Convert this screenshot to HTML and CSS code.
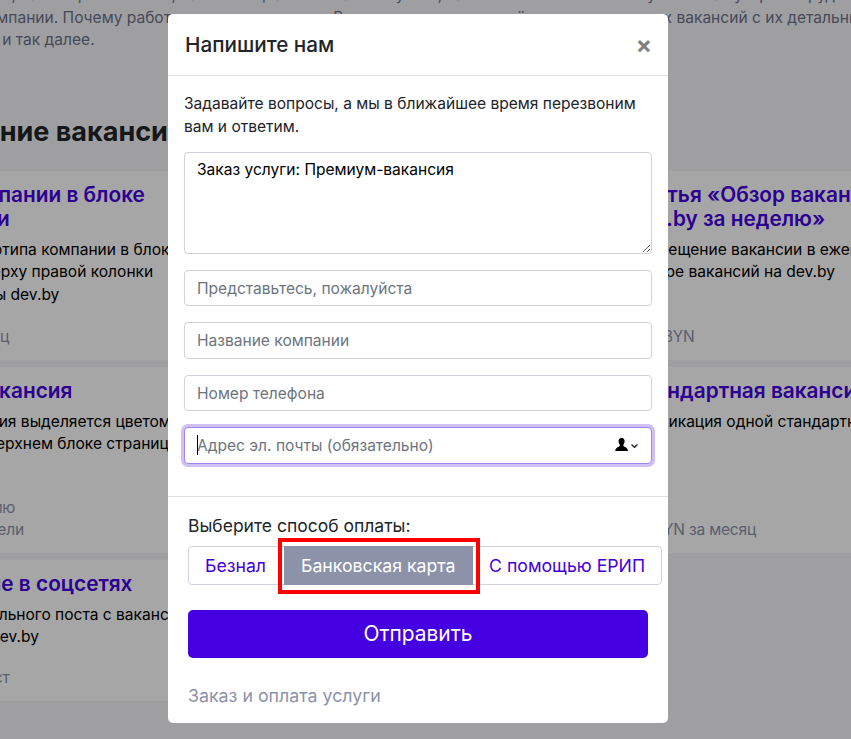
FILE: index.html
```html
<!DOCTYPE html>
<html lang="ru">
<head>
<meta charset="utf-8">
<title>Напишите нам</title>
<link rel="stylesheet" href="styles.css">
</head>
<body>
<main class="page">
  <p class="intro">Расскажите про то, какие проекты есть, какие специалисты на них нужны, какие технологии используются. Как устроен труд<br>и быт в вашей компании. Почему работать у вас интересно. В этом разделе размещён весь список всех вакансий с их детальным описанием<br>условиях работы и так далее.</p>
  <h1 class="section-title">Размещение вакансий</h1>
  <div class="cards">
    <article class="card">
      <h2 class="card-title">Логотип компании в блоке<br>топ-вакансии</h2>
      <p class="card-text">Размещение логотипа компании в блоке<br>Размещается вверху правой колонки<br>главной страницы dev.by</p>
      <p class="card-price">1600 BYN за месяц</p>
    </article>
    <article class="card"></article>
    <article class="card">
      <h2 class="card-title">Статья «Обзор вакансий<br>dev.by за неделю»</h2>
      <p class="card-text">Размещение вакансии в еженедельном<br>обзоре вакансий на dev.by</p>
      <p class="card-price">300 BYN</p>
    </article>
    <article class="card">
      <h2 class="card-title">Премиум-вакансия</h2>
      <p class="card-text">Премиум-вакансия выделяется цветом<br>Размещается в верхнем блоке страницы</p>
      <p class="card-price">500 BYN на неделю<br>700 BYN на 2 недели</p>
    </article>
    <article class="card"></article>
    <article class="card">
      <h2 class="card-title">Стандартная вакансия</h2>
      <p class="card-text">Публикация одной стандартной</p>
      <p class="card-price">50 BYN за месяц</p>
    </article>
    <article class="card">
      <h2 class="card-title">Продвижение в соцсетях</h2>
      <p class="card-text">Публикация отдельного поста с вакансией<br>в соцсетях и на dev.by</p>
      <p class="card-price">2000 BYN за 1 пост</p>
    </article>
  </div>
</main>

<div class="backdrop"></div>

<section class="modal">
  <header class="modal-header">
    <h2 class="modal-title">Напишите нам</h2>
    <span class="close">×</span>
  </header>
  <form class="modal-body">
    <p class="lead">Задавайте вопросы, а мы в ближайшее время перезвоним вам и ответим.</p>
    <textarea class="field field-area">Заказ услуги: Премиум-вакансия</textarea>
    <input class="field" type="text" placeholder="Представьтесь, пожалуйста">
    <input class="field" type="text" placeholder="Название компании">
    <input class="field" type="text" placeholder="Номер телефона">
    <div class="email-wrap">
      <input class="field field-focus" type="text" placeholder="Адрес эл. почты (обязательно)">
      <span class="caret"></span>
      <svg class="contact-icon" width="24" height="14" viewBox="0 0 24 14" aria-hidden="true">
        <path d="M6.500 0C4.400 0 3.400 1.600 3.600 3.500c.1 1.300.6 2.500 1.300 3.300.2.900-.3 1.500-1.200 2C2 9.600.5 10.300.2 12.900H13c-.3-2.600-1.800-3.300-3.500-4.100-.9-.5-1.400-1.100-1.200-2 .7-.8 1.200-2 1.300-3.300C9.800 1.600 8.800 0 6.700 0z" fill="#000"/>
        <path d="M16.500 6.500l3 2.800 3-2.800" fill="none" stroke="#222" stroke-width="1.300"/>
      </svg>
    </div>
  </form>
  <footer class="modal-footer">
    <p class="pay-label">Выберите способ оплаты:</p>
    <div class="pay-group">
      <a class="pay-option pay-first">Безнал</a>
      <a class="pay-option pay-active">Банковская карта</a>
      <a class="pay-option">С помощью ЕРИП</a>
      <span class="highlight"></span>
    </div>
    <button class="submit" type="button">Отправить</button>
    <a class="footer-link">Заказ и оплата услуги</a>
  </footer>
</section>
</body>
</html>
```

FILE: styles.css
```css
* { box-sizing: border-box; }

html, body {
  margin: 0;
  height: 739px;
  overflow: hidden;
}

body {
  position: relative;
  background: #f5f5f8;
  font-family: Inter, "Noto Sans", sans-serif;
  font-size: 15.55px;
  line-height: 22.5px;
  color: #212529;
}

.page {
  width: 1200px;
  margin: -16px 0 0 -149px;
}

.intro {
  margin: 0;
  padding: 0 16px;
  white-space: nowrap;
  color: #6c7289;
}

.section-title {
  margin: 0;
  padding: 62px 16px 0 24px;
  font-size: 27px;
  line-height: 36px;
  font-weight: 700;
  color: #212529;
}

.cards {
  margin-top: 21px;
  display: grid;
  grid-template-columns: repeat(3, 375px);
  grid-template-rows: 189px 186px 141px;
  gap: 7px 6.500px;
}

.card {
  background: #fff;
  padding: 12px 16px 11px;
  display: flex;
  flex-direction: column;
}

.card-title {
  margin: 0 0 8px;
  font-size: 20.8px;
  line-height: 24px;
  font-weight: 600;
  color: #4400e0;
}

.card-text {
  margin: 0;
  color: #000;
}

.card-price {
  margin: auto 0 0;
  letter-spacing: -.2px;
  color: #8c93a8;
}

.backdrop {
  position: absolute;
  inset: 0;
  background: rgba(0, 0, 0, .35);
}

.modal {
  position: absolute;
  left: 168px;
  top: 14px;
  width: 500px;
  height: 709px;
  background: #fff;
  border-radius: 5px;
  display: flex;
  flex-direction: column;
}

.modal-header {
  height: 62px;
  padding: 0 16px 0 17px;
  border-bottom: 1px solid #dee2e6;
  display: flex;
  align-items: center;
  justify-content: space-between;
}

.modal-title {
  margin: 0;
  font-size: 20.7px;
  line-height: 30px;
  font-weight: 500;
  color: #212529;
}

.close {
  font-size: 24px;
  font-weight: 700;
  line-height: 1;
  color: #808080;
}

.modal-body {
  padding: 17px 16px 0;
  height: 421px;
  border-bottom: 1px solid #dee2e6;
}

.lead {
  margin: 0 0 13.9px;
}

.field {
  display: block;
  width: 100%;
  height: 36.500px;
  margin: 0 0 16px;
  padding: 6px 12px;
  border: 1px solid #ced4da;
  border-radius: 4px;
  background: #fff;
  font: inherit;
  color: #000;
  outline: none;
}

.field::placeholder {
  color: #6c757d;
  opacity: 1;
}

.field-area {
  height: 102px;
  resize: vertical;
}

.field-focus {
  border-color: #a285ec;
  box-shadow: 0 0 0 3px #cfc0f8;
}

.email-wrap {
  position: relative;
}

.caret {
  position: absolute;
  left: 13px;
  top: 8px;
  width: 1px;
  height: 20px;
  background: #000;
}

.contact-icon {
  position: absolute;
  left: 431px;
  top: 11px;
}

.modal-footer {
  padding: 17px 20px 0;
}

.pay-label {
  margin: 0 0 8px;
  font-size: 17.5px;
  line-height: 24px;
}

.pay-group {
  position: relative;
  display: flex;
  width: 474px;
  height: 39px;
  border: 1px solid #ced4da;
  border-radius: 4px;
}

.pay-option {
  flex: 0 0 189px;
  margin: -1px 0;
  padding: 0 16px;
  font-size: 17.7px;
  line-height: 39px;
  white-space: nowrap;
  color: #4400e0;
}

.pay-first {
  flex-basis: 95px;
}

.pay-active {
  padding-left: 17px;
  background: #8c93a8;
  color: #fff;
}

.highlight {
  position: absolute;
  left: 89px;
  top: -9px;
  width: 202px;
  height: 56px;
  border: 4px solid #f00;
}

.submit {
  display: block;
  width: 460px;
  height: 48px;
  margin: 25px 0 0;
  border: 0;
  border-radius: 5px;
  background: #4400e0;
  color: #fff;
  font: inherit;
  font-size: 20.9px;
}

.footer-link {
  display: block;
  margin-top: 25px;
  font-size: 17.8px;
  line-height: 25px;
  color: #8c93a8;
}
```
